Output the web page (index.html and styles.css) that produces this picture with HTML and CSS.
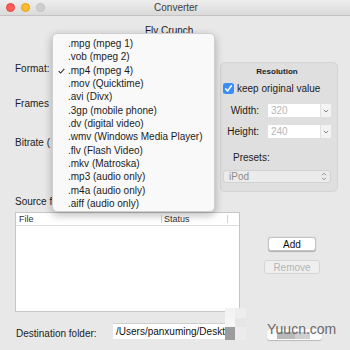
FILE: index.html
```html
<!DOCTYPE html>
<html>
<head>
<meta charset="utf-8">
<link rel="stylesheet" href="styles.css">
</head>
<body>
<div class="window">
  <div class="titlebar">
    <div class="lights">
      <span class="light red"></span>
      <span class="light yellow"></span>
      <span class="light gray"></span>
    </div>
    <div class="title">Converter</div>
    <div></div>
  </div>
  <div class="content">
    <div class="top">
      <div class="left-col">
        <div class="heading">Fly Crunch</div>
        <div class="label format">Format:</div>
        <div class="label frames">Frames</div>
        <div class="label bitrate">Bitrate (</div>
      </div>
      <div class="group">
        <div class="res-title">Resolution</div>
        <div class="check-row">
          <span class="checkbox">
            <svg width="11" height="11" viewBox="0 0 11 11"><path d="M2.6 5.8 L4.6 8 L8.4 2.8" fill="none" stroke="#fff" stroke-width="1.5" stroke-linecap="round" stroke-linejoin="round"/></svg>
          </span>
          <span>keep original value</span>
        </div>
        <div class="dim-row first">
          <span class="dim-label">Width:</span>
          <span class="dim-input">320</span>
          <span class="dim-arrow"><svg width="6" height="4" viewBox="0 0 6 4"><path d="M0.8 0.8 L3 3 L5.2 0.8" fill="none" stroke="#777" stroke-width="0.9"/></svg></span>
        </div>
        <div class="dim-row second">
          <span class="dim-label">Height:</span>
          <span class="dim-input">240</span>
          <span class="dim-arrow"><svg width="6" height="4" viewBox="0 0 6 4"><path d="M0.8 0.8 L3 3 L5.2 0.8" fill="none" stroke="#777" stroke-width="0.9"/></svg></span>
        </div>
        <div class="presets-label">Presets:</div>
        <div class="preset-select">
          <span>iPod</span>
          <svg width="6" height="9" viewBox="0 0 6 9"><path d="M1 3.2 L3 1.2 L5 3.2 M1 5.8 L3 7.8 L5 5.8" fill="none" stroke="#888" stroke-width="0.9"/></svg>
        </div>
      </div>
    </div>
    <div class="label source">Source f</div>
    <div class="files-row">
      <div class="table">
        <div class="thead">
          <div class="th col-file">File</div>
          <div class="th col-status">Status</div>
          <div class="th col-rest"></div>
        </div>
      </div>
      <div class="buttons">
        <div class="btn add">Add</div>
        <div class="btn remove">Remove</div>
      </div>
    </div>
    <div class="dest-row">
      <span class="dest-label">Destination folder:</span>
      <div class="path-input">/Users/panxuming/Deskt</div>
      <div class="choose-btn">
        <span class="blur a"></span><span class="blur b"></span>
      </div>
    </div>
  </div>

  <div class="menu">
    <div class="item">.mpg (mpeg 1)</div>
    <div class="item">.vob (mpeg 2)</div>
    <div class="item checked">
      <svg class="tick" width="7" height="6" viewBox="0 0 7 6"><path d="M0.7 3.2 L2.6 5 L6.3 0.8" fill="none" stroke="#333" stroke-width="1.1"/></svg>
      .mp4 (mpeg 4)</div>
    <div class="item">.mov (Quicktime)</div>
    <div class="item">.avi (Divx)</div>
    <div class="item">.3gp (mobile phone)</div>
    <div class="item">.dv (digital video)</div>
    <div class="item">.wmv (Windows Media Player)</div>
    <div class="item">.flv (Flash Video)</div>
    <div class="item">.mkv (Matroska)</div>
    <div class="item">.mp3 (audio only)</div>
    <div class="item">.m4a (audio only)</div>
    <div class="item">.aiff (audio only)</div>
  </div>

  <div class="mosaic">
    <span class="m1"></span><span class="m2"></span>
    <span class="m3"></span><span class="m4"></span>
    <span class="m5"></span><span class="m6"></span>
  </div>
  <div class="watermark">Yuucn.com</div>
</div>
</body>
</html>
```

FILE: styles.css
```css
* { box-sizing: border-box; }
html, body { margin: 0; padding: 0; }
body {
  font-family: "Liberation Sans", Arial, sans-serif;
  font-size: 10px;
  color: #1c1c1c;
  background: #e8e8e8;
}
.window {
  position: relative;
  width: 350px;
  height: 350px;
  overflow: hidden;
  background: #e8e8e8;
}
.titlebar {
  height: 16px;
  display: grid;
  grid-template-columns: 1fr auto 1fr;
  align-items: center;
  background: linear-gradient(#ededed, #dadada);
  border-bottom: 1px solid #c4c4c4;
}
.lights {
  display: flex;
  gap: 6px;
  padding-left: 6px;
}
.light {
  width: 9px;
  height: 9px;
  border-radius: 50%;
}
.light.red { background: #fc5b57; border: 0.5px solid #e3433f; }
.light.yellow { background: #fdbb2e; border: 0.5px solid #e1a116; }
.light.gray { background: #cfcfcf; border: 0.5px solid #c0c0c0; }
.title {
  font-size: 10px;
  color: #3e3e3e;
  line-height: 12px;
  padding-left: 2px;
}
.content {
  padding-left: 15px;
}
.top {
  display: grid;
  grid-template-columns: 205px 118px;
  padding-top: 9px;
}
.label, .heading {
  line-height: 12px;
  white-space: nowrap;
}
.heading { margin-left: 130px; }
.format { margin-top: 26px; }
.frames { margin-top: 23px; }
.bitrate { margin-top: 27px; }

.group {
  margin-top: 37px;
  height: 130px;
  background: #dfdfdf;
  border: 1px solid #d4d4d4;
  border-radius: 5px;
  padding: 4px 6px 8px 2px;
}
.res-title {
  text-align: center;
  font-weight: bold;
  font-size: 8px;
  line-height: 10px;
  color: #222;
}
.check-row {
  margin-top: 5px;
  height: 12px;
  display: flex;
  align-items: center;
  gap: 3px;
}
.checkbox {
  width: 11px;
  height: 11px;
  border-radius: 2.5px;
  background: #3a8ef6;
  display: flex;
}
.dim-row {
  display: flex;
  align-items: center;
  height: 13px;
}
.dim-row.first { margin-top: 10px; }
.dim-row.second { margin-top: 8px; }
.dim-label {
  width: 36px;
  text-align: right;
  margin-right: 9px;
}
.dim-input {
  width: 52px;
  height: 13px;
  background: #fff;
  color: #b8b8b8;
  padding-left: 3px;
  line-height: 13px;
}
.dim-arrow {
  width: 11px;
  height: 13px;
  background: #f3f3f3;
  border-left: 1px solid #e2e2e2;
  display: flex;
  align-items: center;
  justify-content: center;
}
.presets-label {
  margin-top: 14px;
  margin-left: 10px;
  line-height: 12px;
}
.preset-select {
  margin-top: 6px;
  height: 13px;
  width: 108px;
  background: #ebebeb;
  border: 1px solid #d2d2d2;
  border-radius: 3px;
  display: flex;
  align-items: center;
  justify-content: space-between;
  padding: 0 3px 0 5px;
  color: #8c8c8c;
}
.source { margin-top: 4px; }
.files-row {
  margin-top: 4px;
  display: flex;
}
.table {
  width: 225px;
  height: 100px;
  background: #fff;
  border: 1px solid #c6c6c6;
}
.thead {
  display: flex;
  height: 13px;
  border-bottom: 1px solid #dcdcdc;
}
.th {
  font-size: 9px;
  line-height: 12px;
  color: #333;
}
.col-file { width: 145px; padding-left: 3px; }
.col-status {
  width: 66px;
  padding-left: 2px;
  border-left: 1px solid #d2d2d2;
  margin: 2px 0;
  line-height: 8px;
}
.col-rest {
  flex: 1;
  border-left: 1px solid #d2d2d2;
  margin: 2px 0;
}
.buttons {
  flex: 1;
  padding-right: 6px;
  display: flex;
  flex-direction: column;
  align-items: center;
}
.btn {
  height: 14px;
  line-height: 14px;
  text-align: center;
  border-radius: 3px;
}
.add {
  margin-top: 25px;
  width: 48px;
  background: #fff;
  border: 0.5px solid #c4c4c4;
  box-shadow: 0 0.5px 1px rgba(0,0,0,0.25);
  color: #111;
}
.remove {
  margin-top: 9px;
  width: 56px;
  background: #efefef;
  border: 0.5px solid #d4d4d4;
  color: #b4b4b4;
}
.dest-row {
  margin-top: 11px;
  display: flex;
  align-items: center;
  height: 16px;
}
.dest-label {
  margin-left: 1px;
  width: 82px;
  white-space: nowrap;
  margin-right: 15px;
  padding-top: 4px;
}
.path-input {
  width: 132px;
  height: 16px;
  background: #fff;
  border-top: 1px solid #cfcfcf;
  padding-left: 3px;
  line-height: 15px;
  white-space: nowrap;
  overflow: hidden;
  color: #111;
}
.choose-btn {
  margin-left: 22px;
  margin-top: 7px;
  width: 55px;
  height: 11px;
  background: #fbfbfb;
  border-radius: 3px;
  box-shadow: 0 0.5px 1px rgba(0,0,0,0.2);
  display: flex;
  padding: 3px 0 0 10px;
}
.blur { height: 7px; display: block; }
.blur.a { width: 18px; background: #b9b9b9; }
.blur.b { width: 15px; background: #cfcfcf; }

.menu {
  position: absolute;
  left: 52px;
  top: 33px;
  width: 163px;
  height: 179px;
  background: #f9f9f9;
  border: 0.5px solid #cfcfcf;
  border-radius: 5px;
  box-shadow: 0 3px 9px rgba(0,0,0,0.28);
  padding-top: 3px;
}
.item {
  position: relative;
  height: 13.35px;
  line-height: 13.35px;
  padding-left: 15px;
  color: #1c1c1c;
  white-space: nowrap;
}
.tick {
  position: absolute;
  left: 5px;
  top: 4px;
}
.mosaic {
  position: absolute;
  left: 225px;
  top: 308px;
  width: 21px;
  height: 32px;
  display: grid;
  grid-template-columns: 10px 11px;
  grid-template-rows: 10px 9px 13px;
}
.m1 { background: #f3f3f3; }
.m2 { background: #eeeeee; }
.m3 { background: #f6f6f6; }
.m4 { background: #e6e6e6; }
.m5 { background: #9c9c9c; }
.m6 { background: #ececec; }
.watermark {
  position: absolute;
  left: 267px;
  top: 321px;
  font-size: 14px;
  line-height: 16px;
  color: #6a6a6a;
}
```
